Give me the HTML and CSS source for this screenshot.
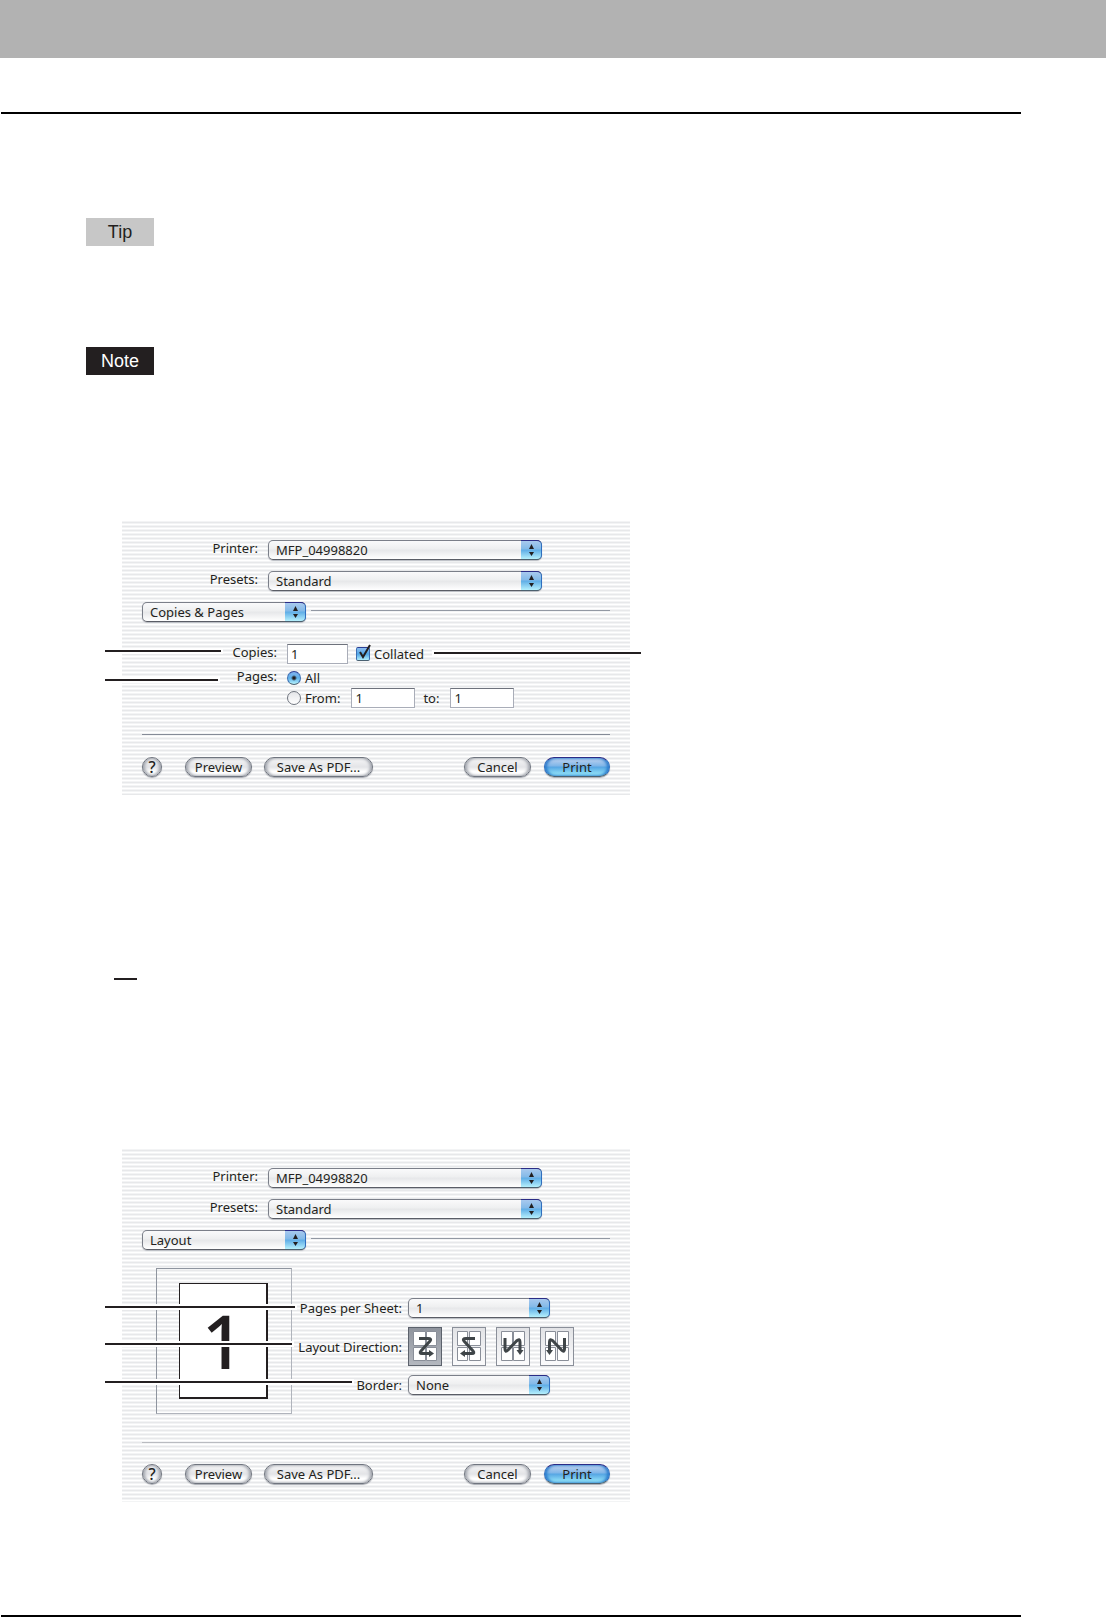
FILE: index.html
```html
<!DOCTYPE html>
<html lang="en">

<head>
    <meta charset="UTF-8">
    <meta name="viewport" content="width=device-width, initial-scale=1.0">
    <title>Printing from Macintosh</title>
    <link rel="stylesheet" href="styles.css">
</head>

<body>
    <header class="page-header"></header>
    <hr class="page-rule top">

    <main>
        <div class="badge tip">Tip</div>
        <div class="badge note">Note</div>

        <!-- Copies & Pages -->
        <form class="dialog">
            <div class="row">
                <label for="printer1">Printer:</label>
                <span class="popup">
                    <select id="printer1"><option>MFP_04998820</option></select>
                    <span class="cap"><svg viewBox="0 0 5 12"><path d="M2.5 0L5 5H0zM2.5 12L5 8H0z"/></svg></span>
                </span>
            </div>
            <div class="row">
                <label for="presets1">Presets:</label>
                <span class="popup">
                    <select id="presets1"><option>Standard</option></select>
                    <span class="cap"><svg viewBox="0 0 5 12"><path d="M2.5 0L5 5H0zM2.5 12L5 8H0z"/></svg></span>
                </span>
            </div>
            <div class="pane-row">
                <span class="popup">
                    <select aria-label="Pane"><option>Copies &amp; Pages</option></select>
                    <span class="cap"><svg viewBox="0 0 5 12"><path d="M2.5 0L5 5H0zM2.5 12L5 8H0z"/></svg></span>
                </span>
                <span class="line"></span>
            </div>

            <div class="copies">
                <label class="name" for="copies">Copies:</label>
                <div class="field">
                    <input class="text short" type="text" id="copies" value="1">
                    <span class="check">
                        <input type="checkbox" id="collated" checked>
                        <svg viewBox="0 0 14 16"><path d="M3 8L6 13L13 1"/></svg>
                    </span>
                    <label for="collated">Collated</label>
                </div>

                <span class="name">Pages:</span>
                <div class="field all">
                    <input type="radio" name="pages" id="all" checked>
                    <label for="all">All</label>
                </div>

                <div class="field range">
                    <input type="radio" name="pages" id="from">
                    <label for="from">From:</label>
                    <input class="text" type="text" aria-label="From page" value="1">
                    <label for="to">to:</label>
                    <input class="text" type="text" id="to" value="1">
                </div>
            </div>

            <div class="buttons">
                <button type="button" class="help">?</button>
                <button type="button" class="preview">Preview</button>
                <button type="button" class="save">Save As PDF...</button>
                <button type="button" class="cancel">Cancel</button>
                <button type="button" class="print">Print</button>
            </div>

            <span class="callout c-copies"></span>
            <span class="callout c-pages"></span>
            <span class="callout c-collated"></span>
        </form>

        <hr class="short-rule">

        <!-- Layout -->
        <form class="dialog layout-dialog">
            <div class="row">
                <label for="printer2">Printer:</label>
                <span class="popup">
                    <select id="printer2"><option>MFP_04998820</option></select>
                    <span class="cap"><svg viewBox="0 0 5 12"><path d="M2.5 0L5 5H0zM2.5 12L5 8H0z"/></svg></span>
                </span>
            </div>
            <div class="row">
                <label for="presets2">Presets:</label>
                <span class="popup">
                    <select id="presets2"><option>Standard</option></select>
                    <span class="cap"><svg viewBox="0 0 5 12"><path d="M2.5 0L5 5H0zM2.5 12L5 8H0z"/></svg></span>
                </span>
            </div>
            <div class="pane-row">
                <span class="popup">
                    <select aria-label="Pane"><option>Layout</option></select>
                    <span class="cap"><svg viewBox="0 0 5 12"><path d="M2.5 0L5 5H0zM2.5 12L5 8H0z"/></svg></span>
                </span>
                <span class="line"></span>
            </div>

            <div class="layout">
                <div class="frame">
                    <div class="sheet">1</div>
                </div>
                <div class="options">
                    <label for="per-sheet">Pages per Sheet:</label>
                    <span class="popup">
                        <select id="per-sheet"><option>1</option></select>
                        <span class="cap"><svg viewBox="0 0 5 12"><path d="M2.5 0L5 5H0zM2.5 12L5 8H0z"/></svg></span>
                    </span>

                    <span id="direction">Layout Direction:</span>
                    <div class="directions" role="group" aria-labelledby="direction">
                        <button type="button" class="direction selected" aria-label="Across, left to right">
                            <svg viewBox="0 0 34 39">
                                <path class="cells" d="M5.5 4.5h12v14h-12zM18.5 4.5h10v14h-10zM5.5 20.5h12v13h-12zM18.5 20.5h10v13h-10z"/>
                                <path class="stroke" d="M11 11.5H20Q24 11.5 22 14L13 24Q11 26.500 14 26.500H22"/>
                                <path class="head" d="M21 23L26 26.500L21 30z"/>
                            </svg>
                        </button>
                        <button type="button" class="direction" aria-label="Across, right to left">
                            <svg viewBox="0 0 34 39">
                                <path class="cells" d="M5.5 4.5h10v14h-10zM17.5 4.500h11v14h-11zM5.5 20.5h10v13h-10zM17.5 20.5h11v13h-11z"/>
                                <path class="stroke" d="M23 11.500H14Q10 11.500 12 14L21 24Q23 26.500 20 26.500H12"/>
                                <path class="head" d="M13 23L8 26.500L13 30z"/>
                            </svg>
                        </button>
                        <button type="button" class="direction" aria-label="Down, left to right">
                            <svg viewBox="0 0 34 39">
                                <path class="cells" d="M5.5 4.5h11v14h-11zM17.5 4.5h11v14h-11zM5.5 20.5h11v13h-11zM17.5 20.5h11v13h-11z"/>
                                <path class="stroke" d="M9 11V22Q9 26 12 23L20.500 14Q24 11 24 15V24"/>
                                <path class="head" d="M20.500 23L24 28L27.500 23z"/>
                            </svg>
                        </button>
                        <button type="button" class="direction" aria-label="Down, right to left">
                            <svg viewBox="0 0 34 39">
                                <path class="cells" d="M5.5 4.5h10v14h-10zM17.5 4.500h11v14h-11zM5.5 20.5h10v13h-10zM17.5 20.5h11v13h-11z"/>
                                <path class="stroke" d="M24.500 11V22Q24.500 26 21.500 23L13 14Q9.500 11 9.500 15V24"/>
                                <path class="head" d="M6 23L9.500 28L13 23z"/>
                            </svg>
                        </button>
                    </div>

                    <label for="border">Border:</label>
                    <span class="popup">
                        <select id="border"><option>None</option></select>
                        <span class="cap"><svg viewBox="0 0 5 12"><path d="M2.5 0L5 5H0zM2.5 12L5 8H0z"/></svg></span>
                    </span>
                </div>
            </div>

            <div class="buttons">
                <button type="button" class="help">?</button>
                <button type="button" class="preview">Preview</button>
                <button type="button" class="save">Save As PDF...</button>
                <button type="button" class="cancel">Cancel</button>
                <button type="button" class="print">Print</button>
            </div>

            <span class="callout c-sheet"></span>
            <span class="callout c-direction"></span>
            <span class="callout c-border"></span>
        </form>
    </main>

    <hr class="page-rule bottom">
</body>

</html>
```
FILE: styles.css
```css
* {
    box-sizing: border-box;
}

body {
    margin: 0;
    background-color: #fff;
    color: #231f20;
    font-family: "Noto Sans", "Open Sans", sans-serif;
    font-size: 13px;
    line-height: 16px;
}

.page-header {
    height: 58px;
    background-color: #b2b2b2;
}

.page-rule {
    height: 2px;
    margin: 0 85px 0 1px;
    border: none;
    background-color: #000;
}

.page-rule.top {
    margin-top: 54px;
}

.page-rule.bottom {
    margin-top: 113px;
}

.badge {
    width: 68px;
    margin-left: 86px;
    font-family: "Liberation Sans", Arial, sans-serif;
    font-size: 18px;
    line-height: 28px;
    text-align: center;
}

.tip {
    margin-top: 104px;
    background-color: #c7c7c7;
}

.note {
    margin-top: 101px;
    background-color: #231f20;
    color: #fff;
}

.short-rule {
    width: 23px;
    height: 2px;
    margin: 183px 0 0 114px;
    border: none;
    background-color: #231f20;
}

/* Dialogs */
.dialog {
    position: relative;
    max-width: 508px;
    margin: 146px 0 0 122px;
    padding: 19px 20px 18px 20px;
    background: repeating-linear-gradient(to bottom, #f3f4f5 0 1px, #e7e8ea 1px 2px, #f3f4f5 2px 3px, #fff 3px 4px);
}

.layout-dialog {
    margin-top: 169px;
}

.row {
    display: grid;
    grid-template-columns: 116px 274px;
    column-gap: 10px;
    height: 20px;
    margin-bottom: 11px;
    text-align: right;
}

.pane-row {
    display: flex;
    gap: 5px;
}

.pane-row .popup {
    width: 164px;
}

.line {
    flex: 1;
    height: 1px;
    margin-top: 8px;
    background-color: #9298a3;
}

.popup {
    display: block;
    position: relative;
    height: 20px;
}

select {
    appearance: none;
    display: block;
    width: 100%;
    height: 20px;
    padding: 0 24px 0 7px;
    border: 1px solid #7b7f89;
    border-bottom-color: #5a5d66;
    border-radius: 5px;
    background: linear-gradient(#fafafb, #eeeff0 45%, #e6e7e9 50%, #fff);
    box-shadow: 0 1px 1px #b9bcc2;
    color: inherit;
    font: inherit;
    line-height: 16px;
}

.cap {
    position: absolute;
    top: 0;
    right: 0;
    display: flex;
    align-items: center;
    justify-content: center;
    width: 21px;
    height: 20px;
    border: 1px solid #2f6fc0;
    border-top-color: #2b2c86;
    border-bottom-color: #4b606f;
    border-left: none;
    border-radius: 0 5px 5px 0;
    background: linear-gradient(#a8c9ee, #82b9e8 45%, #5fade6 50%, #b5f0fd);
    pointer-events: none;
}

.cap svg {
    width: 5px;
    height: 12px;
    fill: #231f20;
}

/* Copies & Pages */
.copies {
    display: grid;
    grid-template-columns: 135px 1fr;
    column-gap: 10px;
    margin-top: 22px;
}

.name {
    text-align: right;
}

.field {
    display: flex;
    align-items: center;
    height: 20px;
    gap: 4px;
}

.all {
    height: 16px;
    margin: 6px 0 2px;
}

.copies span.name {
    margin-top: 4px;
}

.range {
    grid-column: 2;
}

.text {
    width: 64px;
    height: 20px;
    padding: 0 3px;
    border: 1px solid #a9adb8;
    border-top-color: #6e727c;
    background-color: #fff;
    color: inherit;
    font: inherit;
}

.short {
    width: 61px;
    margin-right: 4px;
}

.range .text {
    margin: 0 4px 0 7px;
}

.check {
    position: relative;
    width: 14px;
    height: 14px;
}

input[type="checkbox"],
input[type="radio"] {
    appearance: none;
    display: block;
    width: 14px;
    height: 14px;
    margin: 0;
    border: 1px solid #6f747e;
    background: linear-gradient(#e4e5e8, #fff);
}

input[type="checkbox"] {
    border-color: #2b3f94 #3a6fb4 #4a6172;
    border-radius: 2px;
    background: linear-gradient(#8dbdf0, #4fa5e6 50%, #b0eefc);
}

.check svg {
    position: absolute;
    top: -3px;
    left: 1px;
    width: 14px;
    height: 16px;
    fill: none;
    stroke: #231f20;
    stroke-width: 2;
    pointer-events: none;
}

input[type="radio"] {
    border-radius: 50%;
}

input[type="radio"]:checked {
    border-color: #2b3f94 #3a6fb4 #4a6172;
    background: radial-gradient(circle, #231f20 1px, transparent 3px), linear-gradient(#7fb2ee, #5fb0ea 50%, #b5f3fd);
}

/* Layout */
.layout {
    display: flex;
    margin: 18px 0 0 14px;
}

.frame {
    width: 136px;
    height: 146px;
    padding: 14px 22px;
    border: 1px solid #b0b4bc;
    border-top-color: #8f959f;
    border-left-color: #8f959f;
}

.sheet {
    width: 89px;
    height: 116px;
    border: 1px solid #231f20;
    border-right-width: 2px;
    border-bottom-width: 2px;
    background-color: #fff;
    font-size: 74px;
    font-weight: 500;
    line-height: 114px;
    text-align: center;
}

.options {
    display: grid;
    grid-template-columns: 110px 142px;
    grid-template-rows: 20px 39px 20px;
    gap: 9px 6px;
    align-items: center;
    padding-top: 30px;
    align-self: flex-start;
    text-align: right;
}

.directions {
    display: flex;
    gap: 10px;
}

.direction {
    flex: none;
    width: 34px;
    height: 39px;
    padding: 0;
    border: 1px solid #8a8f99;
    border-radius: 0;
    background: linear-gradient(#e2e3e6, #fbfbfc);
    box-shadow: none;
}

.direction.selected {
    border-color: #5c626c;
    background: linear-gradient(#8f949d, #b4b8bf);
}

.direction svg {
    display: block;
    width: 34px;
    height: 39px;
    margin: -1px;
}

.cells {
    fill: #fff;
    stroke: #8a8f99;
}

.stroke {
    fill: none;
    stroke: #3f4548;
    stroke-width: 3;
}

.head {
    fill: #3f4548;
}

/* Buttons */
.buttons {
    display: flex;
    margin-top: 26px;
    padding-top: 22px;
    border-top: 1px solid #858b97;
}

.layout-dialog .buttons {
    margin-top: 28px;
    padding-top: 21px;
    border-top-color: #b9bbc0;
}

button {
    height: 20px;
    padding: 0;
    border: 1px solid #70757f;
    border-radius: 10px;
    background: linear-gradient(#f6f6f7, #e3e4e7 50%, #fff 75%);
    box-shadow: inset 2px 0 3px #a5a9b1, inset -2px 0 3px #a5a9b1, 0 1px 1px #a8abb2;
    color: inherit;
    font: inherit;
    line-height: 18px;
}

.help {
    width: 20px;
    margin-right: 23px;
    font-size: 16px;
    font-weight: 500;
}

.preview {
    width: 67px;
    margin-right: 12px;
}

.save {
    width: 109px;
    margin-right: auto;
}

.cancel {
    width: 67px;
    margin-right: 13px;
}

.print {
    width: 66px;
    border-color: #2b2c86 #2f6fc0 #4b606f;
    background: linear-gradient(#c3d4f0, #7db5e8 45%, #55a5e3 50%, #9ff0fd);
    box-shadow: inset 2px 0 3px #2c7dcc, inset -2px 0 3px #2c7dcc, 0 1px 1px #a8abb2;
}

/* Callout lines, drawn over the dialogs with a white edge */
.callout {
    position: absolute;
    left: -17px;
    height: 2px;
    background-color: #231f20;
    box-shadow: 0 0 0 2px #fff;
}

.c-copies {
    top: 129px;
    width: 116px;
}

.c-pages {
    top: 158px;
    width: 113px;
}

.c-collated {
    top: 131px;
    left: 312px;
    width: 207px;
}

.c-sheet {
    top: 157px;
    width: 190px;
}

.c-direction {
    top: 194px;
    width: 187px;
}

.c-border {
    top: 232px;
    width: 247px;
}
```
